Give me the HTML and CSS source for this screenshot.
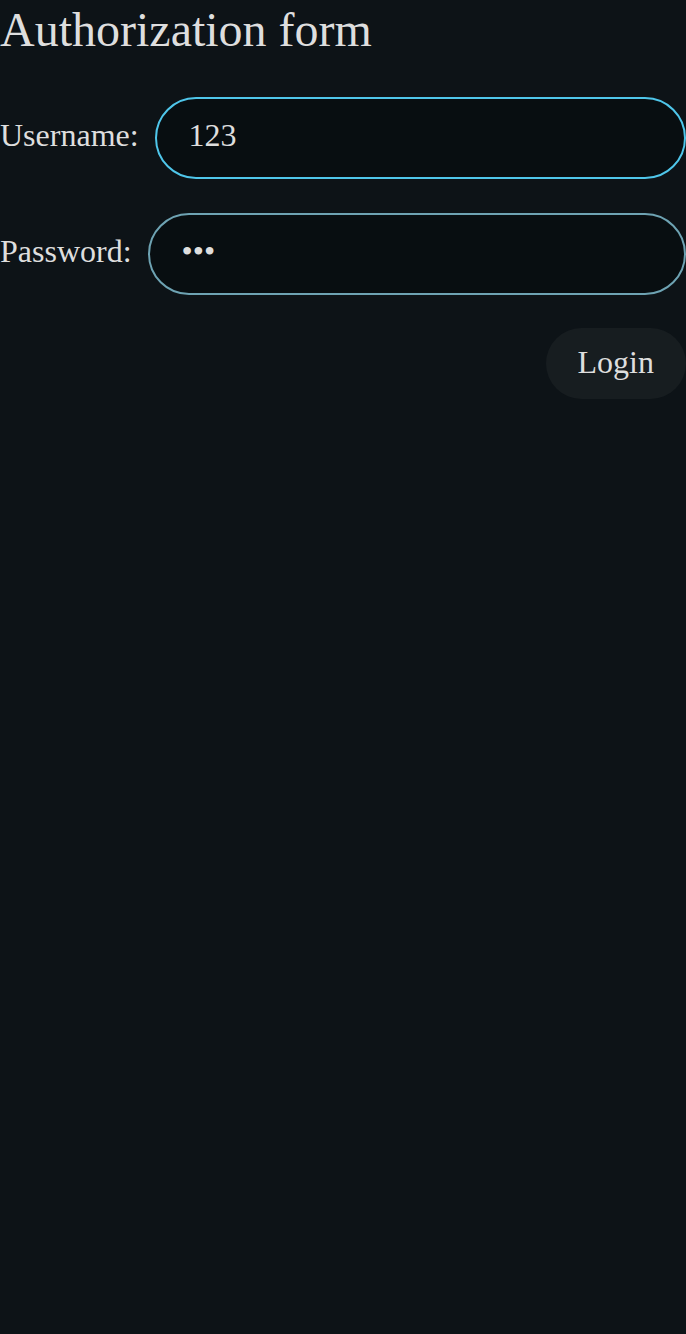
FILE: index.html
```html
<!DOCTYPE html>
<html lang="en">
<head>
<meta charset="utf-8">
<title>Authorization form</title>
<link rel="stylesheet" href="styles.css">
</head>
<body>
<main class="page">
  <h1 class="title">Authorization form</h1>
  <form class="form">
    <div class="row">
      <label class="label" for="username">Username:</label>
      <input class="field field-active" id="username" type="text" value="123">
    </div>
    <div class="row">
      <label class="label" for="password">Password:</label>
      <input class="field" id="password" type="password" value="123">
    </div>
    <div class="actions">
      <button class="btn" type="button">Login</button>
    </div>
  </form>
</main>
</body>
</html>
```
FILE: styles.css
```css
html, body {
  margin: 0;
  padding: 0;
  background: #0d1317;
  color: #dedede;
  font-family: "Liberation Serif", "Times New Roman", serif;
}
.page {
  display: flex;
  flex-direction: column;
  min-height: 1334px;
}
.title {
  margin: 0;
  padding-top: 2px;
  font-size: 48px;
  font-weight: 400;
  line-height: 55px;
}
.form {
  display: flex;
  flex-direction: column;
  gap: 34px;
  margin-top: 40px;
}
.row {
  display: flex;
  align-items: baseline;
  gap: 16px;
}
.label {
  font-size: 32px;
  white-space: nowrap;
}
.field {
  flex: 1;
  min-width: 0;
  box-sizing: border-box;
  height: 82px;
  border-radius: 41px;
  border: 2px solid #6ea3b3;
  background: #080e11;
  color: #dedede;
  font-family: inherit;
  font-size: 32px;
  padding: 0 32px 5px;
  outline: none;
}
.field-active {
  border-color: #4fc6ea;
}
.actions {
  display: flex;
  justify-content: flex-end;
  margin-top: -1px;
}
.btn {
  box-sizing: border-box;
  height: 71px;
  padding: 0 32px 2px;
  border: none;
  border-radius: 36px;
  background: #171d20;
  color: #dedede;
  font-family: inherit;
  font-size: 32px;
}
```
